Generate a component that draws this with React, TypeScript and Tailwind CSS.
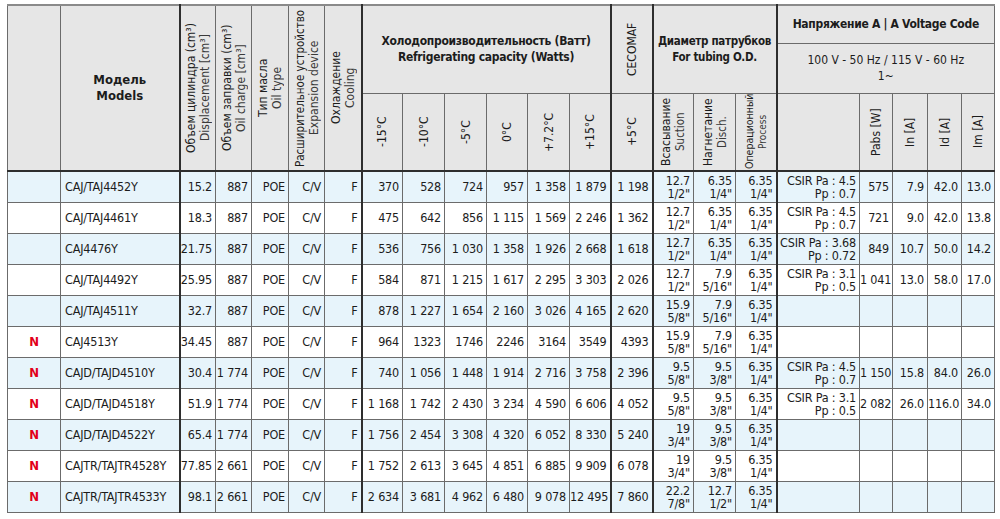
import type { ReactNode } from "react";

type Row = {
  n?: boolean;
  model: string;
  disp: string;
  oil: string;
  cap: string[];
  cec: string;
  tube: [string, string][];
  csir?: [string, string];
  pabs?: string;
  in?: string;
  id?: string;
  im?: string;
};

const t127: [string, string] = ["12.7", '1/2"'];
const t635: [string, string] = ["6.35", '1/4"'];
const t79: [string, string] = ["7.9", '5/16"'];
const t95b: [string, string] = ["9.5", '3/8"'];

const rows: Row[] = [
  { model: "CAJ/TAJ4452Y", disp: "15.2", oil: "887", cap: ["370", "528", "724", "957", "1 358", "1 879"], cec: "1 198", tube: [t127, t635, t635], csir: ["CSIR Pa : 4.5", "Pp : 0.7"], pabs: "575", in: "7.9", id: "42.0", im: "13.0" },
  { model: "CAJ/TAJ4461Y", disp: "18.3", oil: "887", cap: ["475", "642", "856", "1 115", "1 569", "2 246"], cec: "1 362", tube: [t127, t635, t635], csir: ["CSIR Pa : 4.5", "Pp : 0.7"], pabs: "721", in: "9.0", id: "42.0", im: "13.8" },
  { model: "CAJ4476Y", disp: "21.75", oil: "887", cap: ["536", "756", "1 030", "1 358", "1 926", "2 668"], cec: "1 618", tube: [t127, t635, t635], csir: ["CSIR Pa : 3.68", "Pp : 0.72"], pabs: "849", in: "10.7", id: "50.0", im: "14.2" },
  { model: "CAJ/TAJ4492Y", disp: "25.95", oil: "887", cap: ["584", "871", "1 215", "1 617", "2 295", "3 303"], cec: "2 026", tube: [t127, t79, t635], csir: ["CSIR Pa : 3.1", "Pp : 0.5"], pabs: "1 041", in: "13.0", id: "58.0", im: "17.0" },
  { model: "CAJ/TAJ4511Y", disp: "32.7", oil: "887", cap: ["878", "1 227", "1 654", "2 160", "3 026", "4 165"], cec: "2 620", tube: [["15.9", '5/8"'], t79, t635] },
  { n: true, model: "CAJ4513Y", disp: "34.45", oil: "887", cap: ["964", "1323", "1746", "2246", "3164", "3549"], cec: "4393", tube: [["15.9", '5/8"'], t79, t635] },
  { n: true, model: "CAJD/TAJD4510Y", disp: "30.4", oil: "1 774", cap: ["740", "1 056", "1 448", "1 914", "2 716", "3 758"], cec: "2 396", tube: [["9.5", '5/8"'], t95b, t635], csir: ["CSIR Pa : 4.5", "Pp : 0.7"], pabs: "1 150", in: "15.8", id: "84.0", im: "26.0" },
  { n: true, model: "CAJD/TAJD4518Y", disp: "51.9", oil: "1 774", cap: ["1 168", "1 742", "2 430", "3 234", "4 590", "6 606"], cec: "4 052", tube: [["9.5", '5/8"'], t95b, t635], csir: ["CSIR Pa : 3.1", "Pp : 0.5"], pabs: "2 082", in: "26.0", id: "116.0", im: "34.0" },
  { n: true, model: "CAJD/TAJD4522Y", disp: "65.4", oil: "1 774", cap: ["1 756", "2 454", "3 308", "4 320", "6 052", "8 330"], cec: "5 240", tube: [["19", '3/4"'], t95b, t635] },
  { n: true, model: "CAJTR/TAJTR4528Y", disp: "77.85", oil: "2 661", cap: ["1 752", "2 613", "3 645", "4 851", "6 885", "9 909"], cec: "6 078", tube: [["19", '3/4"'], t95b, t635] },
  { n: true, model: "CAJTR/TAJTR4533Y", disp: "98.1", oil: "2 661", cap: ["2 634", "3 681", "4 962", "6 480", "9 078", "12 495"], cec: "7 860", tube: [["22.2", '7/8"'], ["12.7", '1/2"'], t635] },
];

const colW = [
  "w-[53px]", "w-[119px]", "w-[36px]", "w-[36px]", "w-[37px]", "w-[36px]", "w-[37px]",
  "w-[41px]", "w-[42px]", "w-[42px]", "w-[41px]", "w-[42px]", "w-[41px]",
  "w-[42px]", "w-[41px]", "w-[42px]", "w-[41px]",
  "w-[83px]", "w-[33px]", "w-[35px]", "w-[34px]", "w-[33px]",
];

const thick = new Set([2, 7, 13, 14, 17]);

const th = "border border-[#6b6b6b] bg-[#e6e6e6] p-0 align-middle text-center overflow-hidden";
const thk = "border-l-2 border-l-[#2e2e2e]";
const bb = "border-b-2 border-b-[#2e2e2e]";

// rotated header text, reads bottom to top
const V = ({ h, children }: { h: string; children: ReactNode }) => (
  <div className="flex justify-center leading-none">
    <div className={`rotate-180 text-center text-[12px] leading-[14px] whitespace-nowrap [writing-mode:vertical-rl] ${h}`}>{children}</div>
  </div>
);

const Two = ({ a, b }: { a: string; b: string }) => (
  <div className="leading-[13px]">
    <div>{a}</div>
    <div>{b}</div>
  </div>
);

export default function App() {
  return (
    <div className="bg-white pt-[4px] pl-[7px] text-[#1c1c1c] [font-family:'Liberation_Sans_Narrow','DejaVu_Sans_Condensed','Roboto_Condensed','Liberation_Sans',sans-serif] text-[12.5px]">
      <table className="w-[988px] table-fixed border-collapse border-t-2 border-t-[#8a8a8a]">
        <colgroup>
          {colW.map((w, i) => (
            <col key={i} className={w} />
          ))}
        </colgroup>
        <thead>
          <tr className="h-[38px]">
            <th rowSpan={3} className={`${th} ${bb}`}></th>
            <th rowSpan={3} className={`${th} ${bb} text-[13px] font-bold leading-[16px]`}>
              Модель
              <br />
              Models
            </th>
            <th rowSpan={3} className={`${th} ${bb} ${thk} font-normal`}>
              <V h="h-[160px]">
                <div>Объем цилиндра (cm³)</div>
                <div className="text-[#3a3a3a]">Displacement [cm³]</div>
              </V>
            </th>
            <th rowSpan={3} className={`${th} ${bb} font-normal`}>
              <V h="h-[160px]">
                <div>Объем заправки (cm³)</div>
                <div className="text-[#3a3a3a]">Oil charge [cm³]</div>
              </V>
            </th>
            <th rowSpan={3} className={`${th} ${bb} font-normal`}>
              <V h="h-[160px]">
                <div>Тип масла</div>
                <div className="text-[#3a3a3a]">Oil type</div>
              </V>
            </th>
            <th rowSpan={3} className={`${th} ${bb} font-normal`}>
              <V h="h-[160px]">
                <div className="text-[11.5px]">Расширительное устройство</div>
                <div className="text-[#3a3a3a]">Expansion device</div>
              </V>
            </th>
            <th rowSpan={3} className={`${th} ${bb} font-normal`}>
              <V h="h-[160px]">
                <div>Охлаждение</div>
                <div className="text-[#3a3a3a]">Cooling</div>
              </V>
            </th>
            <th rowSpan={2} colSpan={6} className={`${th} ${thk} text-[12px] font-bold leading-[16px] tracking-tight`}>
              Холодопроизводительность (Ватт)
              <br />
              Refrigerating capacity (Watts)
            </th>
            <th rowSpan={2} className={`${th} ${thk} font-normal`}>
              <V h="h-[84px]">CECOMAF</V>
            </th>
            <th rowSpan={2} colSpan={3} className={`${th} ${thk} text-[11.5px] font-bold leading-[16px] tracking-tight whitespace-nowrap`}>
              Диаметр патрубков
              <br />
              For tubing O.D.
            </th>
            <th colSpan={5} className={`${th} ${thk} text-[12px] font-bold tracking-tight whitespace-nowrap`}>
              Напряжение A | A Voltage Code
            </th>
          </tr>
          <tr className="h-[50px]">
            <th colSpan={5} className={`${th} ${thk} text-[12px] font-normal leading-[16px]`}>
              100 V - 50 Hz / 115 V - 60 Hz
              <br />
              1~
            </th>
          </tr>
          <tr className="h-[78px]">
            {["-15°C", "-10°C", "-5°C", "0°C", "+7.2°C", "+15°C"].map((c, i) => (
              <th key={c} className={`${th} ${i === 0 ? thk : ""} ${bb} font-normal`}>
                <V h="h-[72px]">{c}</V>
              </th>
            ))}
            <th className={`${th} ${thk} ${bb} font-normal`}>
              <V h="h-[72px]">+5°C</V>
            </th>
            <th className={`${th} ${thk} ${bb} font-normal`}>
              <V h="h-[74px]">
                <div>Всасывание</div>
                <div className="text-[11.5px] text-[#3a3a3a]">Suction</div>
              </V>
            </th>
            <th className={`${th} ${bb} font-normal`}>
              <V h="h-[74px]">
                <div>Нагнетание</div>
                <div className="text-[11.5px] text-[#3a3a3a]">Disch.</div>
              </V>
            </th>
            <th className={`${th} ${bb} font-normal`}>
              <V h="h-[75px]">
                <div className="text-[10.5px]">Операционный</div>
                <div className="text-[10px] text-[#3a3a3a]">Process</div>
              </V>
            </th>
            <th className={`${th} ${thk} ${bb}`}></th>
            {["Pabs [W]", "In [A]", "Id [A]", "Im [A]"].map((c) => (
              <th key={c} className={`${th} ${bb} font-normal`}>
                <V h="h-[72px]">{c}</V>
              </th>
            ))}
          </tr>
        </thead>
        <tbody>
          {rows.map((r, ri) => {
            const cells: ReactNode[] = [
              r.n ? <span className="text-[13px] font-bold text-[#e2001a]">N</span> : null,
              r.model,
              r.disp,
              r.oil,
              "POE",
              "C/V",
              "F",
              ...r.cap,
              r.cec,
              ...r.tube.map((t) => <Two a={t[0]} b={t[1]} />),
              r.csir ? <Two a={r.csir[0]} b={r.csir[1]} /> : null,
              r.pabs ?? null,
              r.in ?? null,
              r.id ?? null,
              r.im ?? null,
            ];
            return (
              <tr key={r.model} className={`h-[31px] ${ri % 2 === 0 ? "bg-[#e7f4fb]" : "bg-white"}`}>
                {cells.map((c, ci) => (
                  <td
                    key={ci}
                    className={`overflow-hidden border border-[#6b6b6b] py-0 align-middle leading-[15px] tracking-[-0.2px] whitespace-nowrap ${
                      thick.has(ci) ? thk : ""
                    } ${ci === 0 ? "text-center" : ci === 1 ? "pl-[4px] text-left" : "pr-[3px] pl-0 text-right"}`}
                  >
                    {c}
                  </td>
                ))}
              </tr>
            );
          })}
        </tbody>
      </table>
    </div>
  );
}
